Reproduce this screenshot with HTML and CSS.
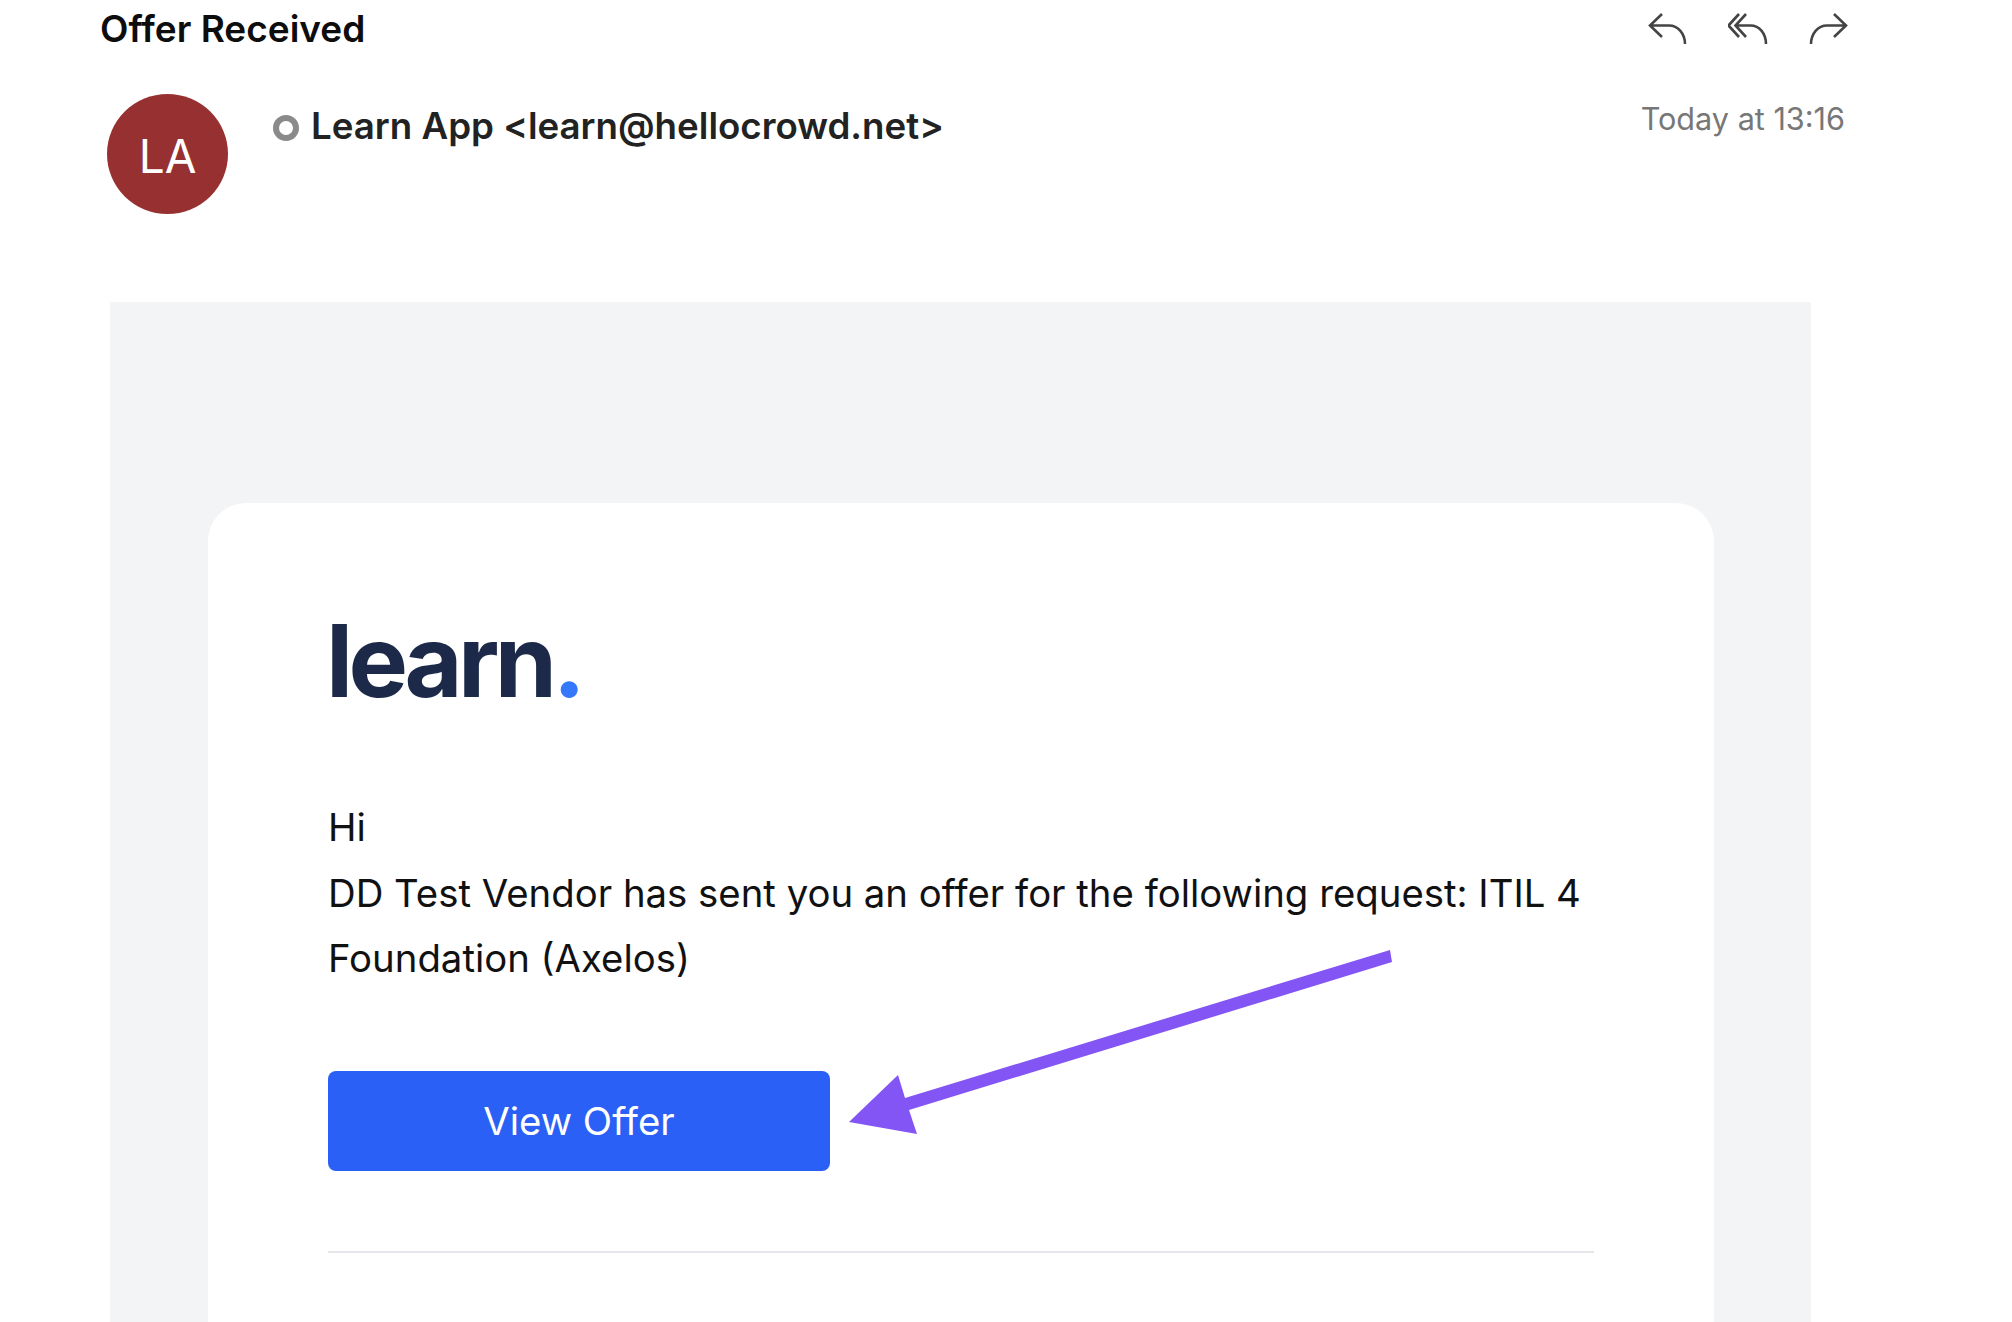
FILE: index.html
```html
<!DOCTYPE html>
<html lang="en">
<head>
    <meta charset="UTF-8">
    <meta name="viewport" content="width=device-width, initial-scale=1.0">
    <title>Offer Received</title>
    <link rel="stylesheet" href="styles.css">
</head>
<body>
    <header class="topbar">
        <h1 class="subject">Offer Received</h1>
        <div class="actions">
            <!-- reply -->
            <svg class="action" width="40" height="34" viewBox="0 0 40 34">
                <path d="M15 2 3 13.5 15 25M3 13.5h19c9 0 16 8 16 18.5"/>
            </svg>
            <!-- reply all -->
            <svg class="action" width="40" height="34" viewBox="0 0 40 34">
                <path d="M11 2 0.5 13.5 11 25M18 2 7.5 13.5 18 25M7.5 13.5h15c9 0 15.500 8 15.500 18.500"/>
            </svg>
            <!-- forward -->
            <svg class="action" width="40" height="34" viewBox="0 0 40 34">
                <path d="M25 2 37 13.5 25 25M37 13.500H18c-9 0-16 8-16 18.500"/>
            </svg>
        </div>
    </header>

    <section class="sender">
        <div class="avatar">LA</div>
        <span class="status"></span>
        <span class="from">Learn App &lt;learn@hellocrowd.net&gt;</span>
        <time class="when">Today at 13:16</time>
    </section>

    <main class="mail">
        <div class="card">
            <div class="logo">learn<span class="logo-dot">.</span></div>
            <p class="copy">Hi<br>DD Test Vendor has sent you an offer for the following request: ITIL 4 Foundation (Axelos)</p>
            <a href="#offer" class="button">View Offer</a>
            <hr class="rule">
        </div>
    </main>

    <!-- annotation drawn over the mail -->
    <svg class="arrow" width="2012" height="1322" viewBox="0 0 2012 1322">
        <polygon points="1390,950 1392,962 909,1110 917,1134 849,1122 898,1075 905,1098"/>
    </svg>
</body>
</html>
```
FILE: styles.css
```css
* {
    margin: 0;
    padding: 0;
    box-sizing: border-box;
}
html, body {
    width: 2012px;
    height: 1322px;
    overflow: hidden;
    background-color: #fff;
    font-family: Inter, "Liberation Sans", sans-serif;
}
.topbar {
    display: flex;
    justify-content: space-between;
    align-items: flex-start;
    height: 94px;
    padding: 8px 163px 0 100px;
}
.subject {
    font-size: 37px;
    line-height: 42px;
    font-weight: 600;
    color: #0d0d0d;
}
.actions {
    display: flex;
    gap: 41px;
    padding-top: 4px;
}
.action {
    fill: none;
    stroke: #444;
    stroke-width: 2.6;
}
.sender {
    display: flex;
    align-items: flex-start;
    height: 208px;
    padding: 0 167px 0 107px;
}
.avatar {
    display: flex;
    align-items: center;
    justify-content: center;
    width: 121px;
    height: 120px;
    padding-top: 3px;
    border-radius: 50%;
    background-color: #973030;
    color: #fff;
    font-size: 46px;
}
.status {
    width: 26px;
    height: 26px;
    margin: 21px 12px 0 45px;
    border: 6px solid #8a8a8a;
    border-radius: 50%;
}
.from {
    flex: 1;
    font-size: 36.7px;
    line-height: 44px;
    font-weight: 600;
    color: #222;
    margin-top: 10px;
}
.when {
    font-size: 30.6px;
    line-height: 38px;
    color: #777;
    margin-top: 6px;
}
.mail {
    width: 1701px;
    height: 1020px;
    margin-left: 110px;
    padding: 201px 97px 0 98px;
    background-color: #f3f4f6;
    overflow: hidden;
}
.card {
    height: 900px;
    padding: 103px 120px 0;
    background-color: #fff;
    border-radius: 38px;
}
.logo {
    margin-left: -2px;
    font-size: 100px;
    line-height: 110px;
    font-weight: 700;
    letter-spacing: -4.6px;
    color: #1c2948;
}
.logo-dot {
    color: #3578fb;
}
.copy {
    margin-top: 79px;
    font-size: 38.35px;
    line-height: 65.5px;
    color: #111;
}
.button {
    display: flex;
    align-items: center;
    justify-content: center;
    width: 502px;
    height: 100px;
    margin-top: 79px;
    border-radius: 8px;
    background-color: #2a60f5;
    color: #fff;
    font-size: 38.35px;
    text-decoration: none;
}
.rule {
    margin-top: 80px;
    border: 0;
    border-top: 2px solid #e5e7eb;
}
.arrow {
    position: absolute;
    top: 0;
    left: 0;
    fill: #8355f5;
}
```
